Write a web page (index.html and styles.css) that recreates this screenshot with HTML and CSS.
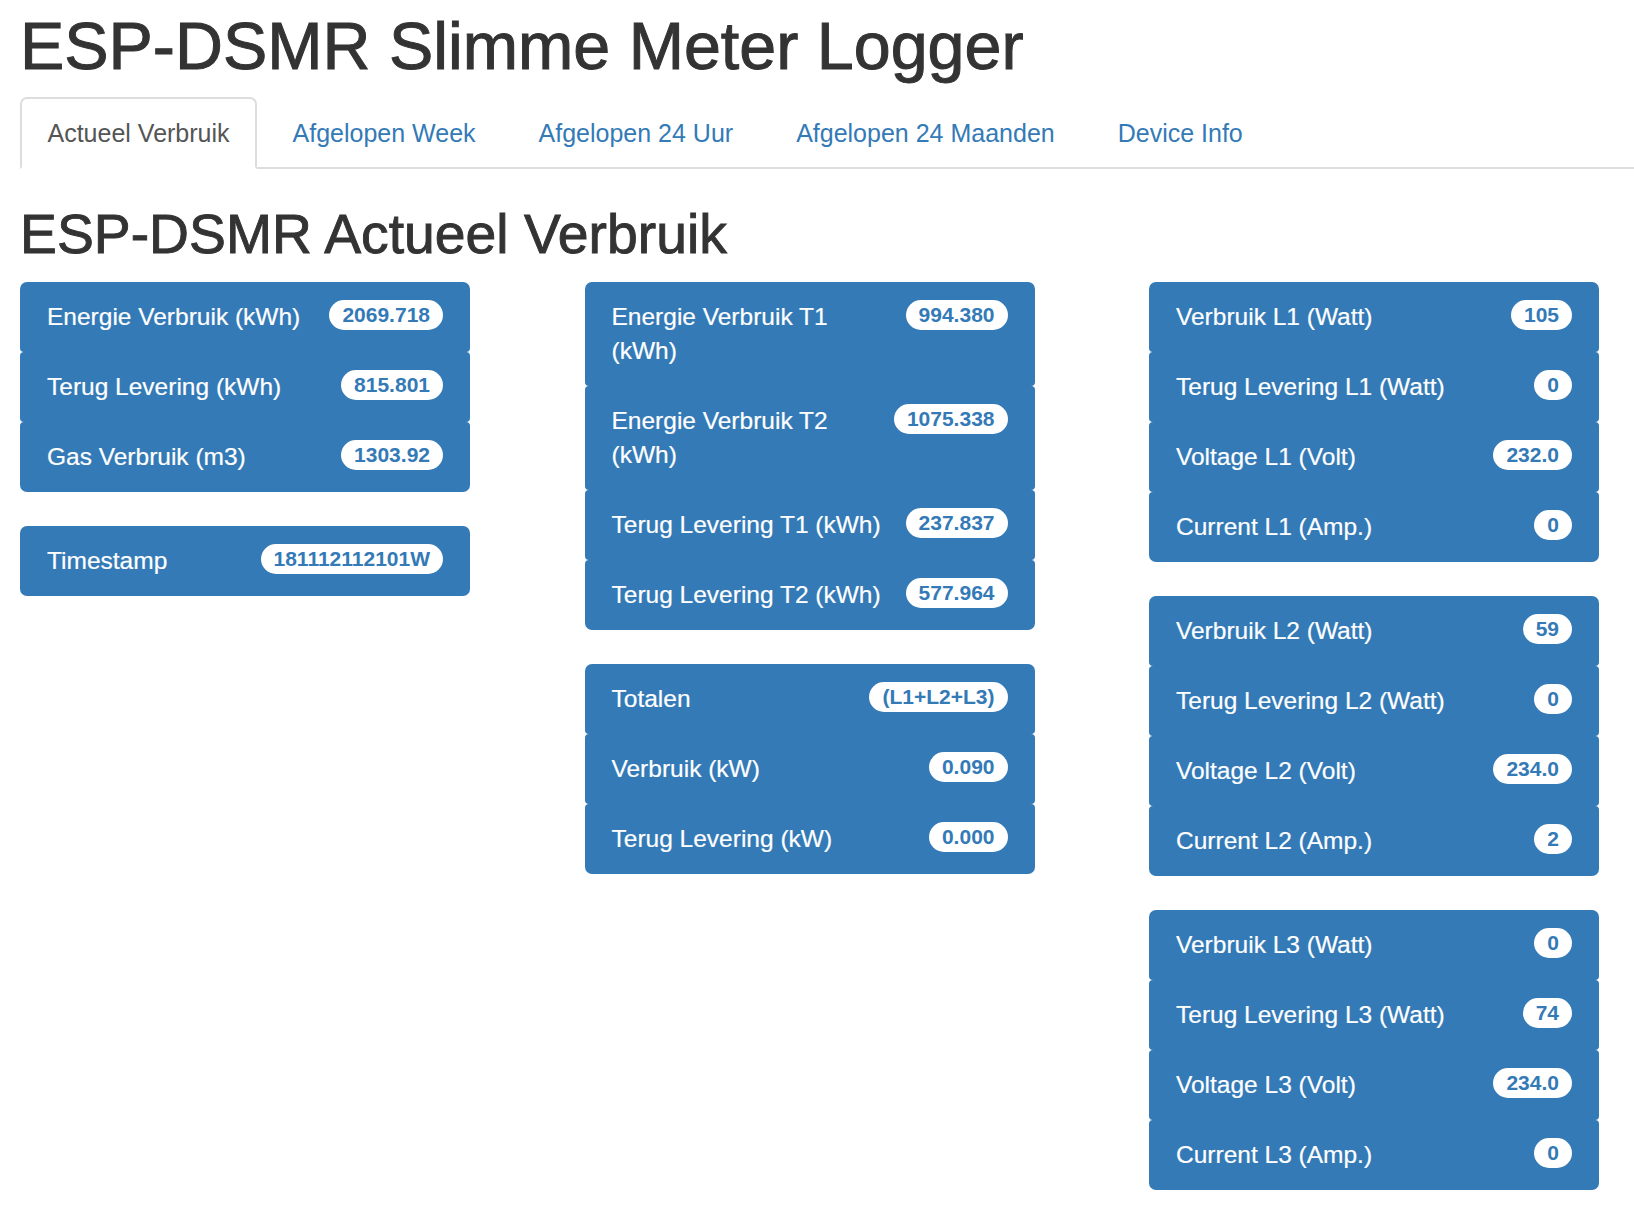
FILE: index.html
```html
<!DOCTYPE html>
<html lang="nl">
<head>
<meta charset="utf-8">
<title>ESP-DSMR Slimme Meter Logger</title>
<link rel="stylesheet" href="styles.css">
</head>
<body>
<div class="page">
  <h1 class="title">ESP-DSMR Slimme Meter Logger</h1>
  <ul class="tabs">
    <li class="tab active"><a href="#">Actueel Verbruik</a></li>
    <li class="tab"><a href="#">Afgelopen Week</a></li>
    <li class="tab"><a href="#">Afgelopen 24 Uur</a></li>
    <li class="tab"><a href="#">Afgelopen 24 Maanden</a></li>
    <li class="tab"><a href="#">Device Info</a></li>
  </ul>
  <h2 class="subtitle">ESP-DSMR Actueel Verbruik</h2>
  <div class="columns">
    <div class="column">
      <ul class="group">
        <li class="item"><span class="badge">2069.718</span>Energie Verbruik (kWh)</li>
        <li class="item"><span class="badge">815.801</span>Terug Levering (kWh)</li>
        <li class="item"><span class="badge">1303.92</span>Gas Verbruik (m3)</li>
      </ul>
      <ul class="group">
        <li class="item"><span class="badge">181112112101W</span>Timestamp</li>
      </ul>
    </div>
    <div class="column">
      <ul class="group">
        <li class="item"><span class="badge">994.380</span>Energie Verbruik T1 (kWh)</li>
        <li class="item"><span class="badge">1075.338</span>Energie Verbruik T2 (kWh)</li>
        <li class="item"><span class="badge">237.837</span>Terug Levering T1 (kWh)</li>
        <li class="item"><span class="badge">577.964</span>Terug Levering T2 (kWh)</li>
      </ul>
      <ul class="group">
        <li class="item"><span class="badge">(L1+L2+L3)</span>Totalen</li>
        <li class="item"><span class="badge">0.090</span>Verbruik (kW)</li>
        <li class="item"><span class="badge">0.000</span>Terug Levering (kW)</li>
      </ul>
    </div>
    <div class="column">
      <ul class="group">
        <li class="item"><span class="badge">105</span>Verbruik L1 (Watt)</li>
        <li class="item"><span class="badge">0</span>Terug Levering L1 (Watt)</li>
        <li class="item"><span class="badge">232.0</span>Voltage L1 (Volt)</li>
        <li class="item"><span class="badge">0</span>Current L1 (Amp.)</li>
      </ul>
      <ul class="group">
        <li class="item"><span class="badge">59</span>Verbruik L2 (Watt)</li>
        <li class="item"><span class="badge">0</span>Terug Levering L2 (Watt)</li>
        <li class="item"><span class="badge">234.0</span>Voltage L2 (Volt)</li>
        <li class="item"><span class="badge">2</span>Current L2 (Amp.)</li>
      </ul>
      <ul class="group">
        <li class="item"><span class="badge">0</span>Verbruik L3 (Watt)</li>
        <li class="item"><span class="badge">74</span>Terug Levering L3 (Watt)</li>
        <li class="item"><span class="badge">234.0</span>Voltage L3 (Volt)</li>
        <li class="item"><span class="badge">0</span>Current L3 (Amp.)</li>
      </ul>
    </div>
  </div>
</div>
</body>
</html>
```

FILE: styles.css
```css
* { box-sizing: border-box; }

html, body {
  margin: 0;
  padding: 0;
  background: #fff;
}

body {
  font-family: "Liberation Sans", Arial, Helvetica, sans-serif;
  color: #333;
  overflow: hidden;
}

.page {
  padding-left: 20px;
}

.title {
  margin: 6px 0 0 0;
  font-size: 66.4px;
  line-height: 80px;
  font-weight: normal;
  color: #333;
  -webkit-text-stroke: 1px #333;
  white-space: nowrap;
}

.tabs {
  list-style: none;
  margin: 11px 0 0 0;
  padding: 0;
  display: flex;
  border-bottom: 2px solid #ddd;
  width: 1614px;
}

.tab {
  margin-right: 8px;
  margin-bottom: -2px;
}

.tab a {
  display: block;
  padding: 17px 25.5px;
  line-height: 34px;
  font-size: 25px;
  color: #337ab7;
  text-decoration: none;
  border: 2px solid transparent;
  border-radius: 7px 7px 0 0;
  white-space: nowrap;
}

.tab.active a {
  color: #555;
  background: #fff;
  border-color: #ddd;
  border-bottom-color: #fff;
}

.subtitle {
  margin: 35px 0 18px 0;
  font-size: 55.3px;
  line-height: 60px;
  font-weight: normal;
  color: #333;
  -webkit-text-stroke: 0.9px #333;
  white-space: nowrap;
}

.columns {
  display: grid;
  grid-template-columns: 450px 450px 450px;
  column-gap: 114.5px;
  align-items: start;
}

.group {
  list-style: none;
  margin: 0 0 34px 0;
  padding: 0;
}

.item {
  background: #337ab7;
  color: #fff;
  font-size: 24.5px;
  line-height: 34px;
  padding: 18px 27px;
  border-radius: 4px;
  -webkit-text-stroke: 0.2px #fff;
}

.item:first-child {
  border-top-left-radius: 7px;
  border-top-right-radius: 7px;
}

.item:last-child {
  border-bottom-left-radius: 7px;
  border-bottom-right-radius: 7px;
}

.badge {
  float: right;
  margin-left: 10px;
  background: #fff;
  color: #337ab7;
  font-size: 21px;
  font-weight: bold;
  line-height: 20px;
  padding: 5px 13px;
  border-radius: 17px;
  white-space: nowrap;
  -webkit-text-stroke: 0;
}
```
